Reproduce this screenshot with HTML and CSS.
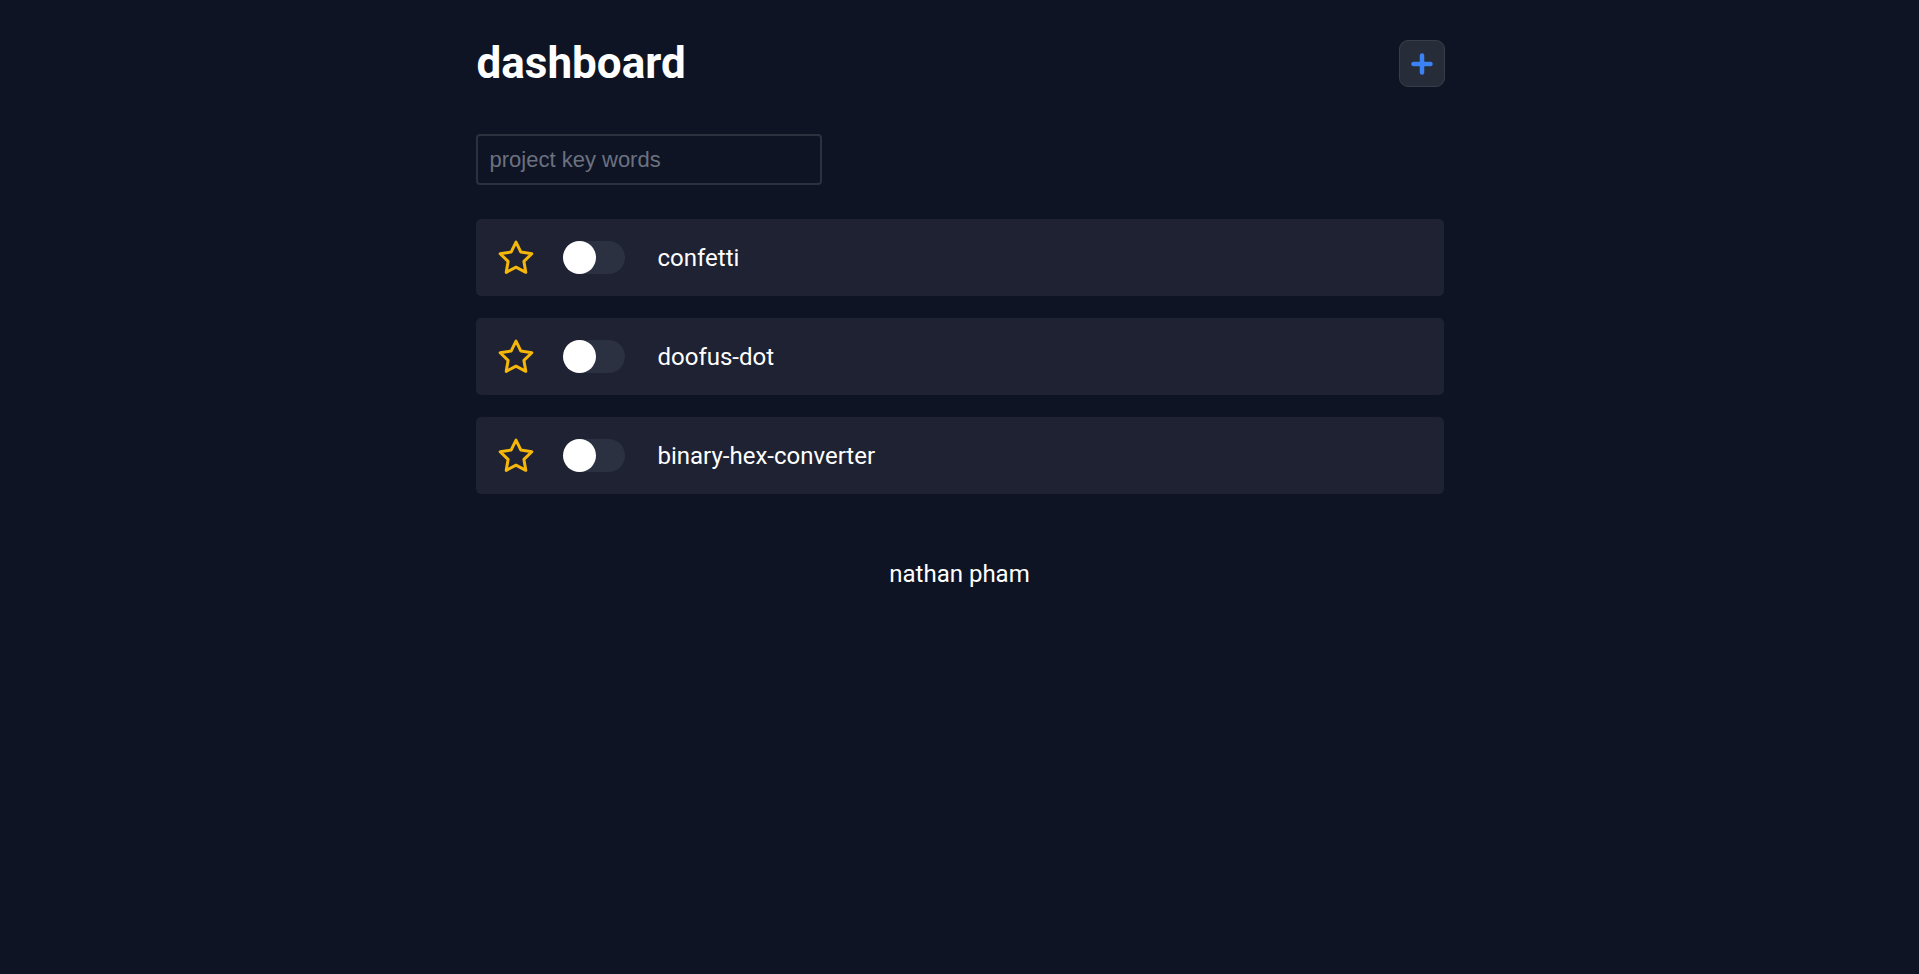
FILE: index.html
```html
<!DOCTYPE html>
<html lang="en">
<head>
<meta charset="utf-8">
<title>dashboard</title>
<link rel="stylesheet" href="styles.css">
</head>
<body>
<main class="page">
  <header class="header">
    <h1 class="title">dashboard</h1>
    <button class="add-btn" aria-label="add project">
      <svg width="22" height="22" viewBox="0 0 22 22"><line x1="11" y1="2.5" x2="11" y2="19.5" stroke="#3b82f6" stroke-width="4.5" stroke-linecap="round"/><line x1="2.5" y1="11" x2="19.5" y2="11" stroke="#3b82f6" stroke-width="4.5" stroke-linecap="round"/></svg>
    </button>
  </header>
  <input class="search" type="text" placeholder="project key words">
  <ul class="list">
    <li class="row">
      <svg class="star" width="40" height="40" viewBox="0 0 24 24"><path d="M12 2.5l2.94 5.96 6.56.96-4.75 4.63 1.12 6.54L12 17.5l-5.87 3.09 1.12-6.54L2.5 9.42l6.56-.96z" fill="none" stroke="#f5b70a" stroke-width="1.8" stroke-linejoin="round"/></svg>
      <span class="toggle"><span class="knob"></span></span>
      <span class="name">confetti</span>
    </li>
    <li class="row">
      <svg class="star" width="40" height="40" viewBox="0 0 24 24"><path d="M12 2.5l2.94 5.96 6.56.96-4.75 4.63 1.12 6.54L12 17.5l-5.87 3.09 1.12-6.54L2.5 9.42l6.56-.96z" fill="none" stroke="#f5b70a" stroke-width="1.8" stroke-linejoin="round"/></svg>
      <span class="toggle"><span class="knob"></span></span>
      <span class="name">doofus-dot</span>
    </li>
    <li class="row">
      <svg class="star" width="40" height="40" viewBox="0 0 24 24"><path d="M12 2.5l2.94 5.96 6.56.96-4.75 4.63 1.12 6.54L12 17.5l-5.87 3.09 1.12-6.54L2.5 9.42l6.56-.96z" fill="none" stroke="#f5b70a" stroke-width="1.8" stroke-linejoin="round"/></svg>
      <span class="toggle"><span class="knob"></span></span>
      <span class="name">binary-hex-converter</span>
    </li>
  </ul>
  <footer class="footer">nathan pham</footer>
</main>
</body>
</html>
```
FILE: styles.css
```css
html, body {
  margin: 0;
  padding: 0;
  background: #0e1424;
  color: #ffffff;
  font-family: Roboto, "Noto Sans", sans-serif;
  min-height: 100%;
}

.page {
  width: 968px;
  margin: 0 auto;
  padding-top: 40px;
}

.header {
  display: flex;
  justify-content: space-between;
  align-items: center;
  height: 47px;
}

.title {
  margin: 0;
  font-size: 44px;
  font-weight: 700;
  line-height: 47px;
  padding-left: 1px;
}

.add-btn {
  width: 46px;
  height: 47px;
  margin-right: -1px;
  border-radius: 9px;
  background: #272c39;
  border: 1px solid #383d4a;
  display: flex;
  align-items: center;
  justify-content: center;
  padding: 0;
  cursor: pointer;
}

.search {
  display: block;
  margin-top: 47px;
  width: 346px;
  height: 51px;
  box-sizing: border-box;
  background: #0e1424;
  border: 2px solid #2c313d;
  border-radius: 4px;
  padding: 0 12px;
  color: #d0d4dc;
  font-family: "Liberation Sans", Arial, sans-serif;
  font-size: 22px;
  outline: none;
}

.search::placeholder {
  color: #6b7180;
}

.list {
  list-style: none;
  margin: 34px 0 0;
  padding: 0;
  display: flex;
  flex-direction: column;
  gap: 22px;
}

.row {
  height: 77px;
  background: #1e2232;
  border-radius: 5px;
  display: flex;
  align-items: center;
  padding-left: 20px;
}

.star {
  display: block;
  flex: none;
}

.toggle {
  margin-left: 27px;
  width: 62px;
  height: 33px;
  border-radius: 17px;
  background: #2c3142;
  position: relative;
  flex: none;
}

.knob {
  position: absolute;
  left: 0;
  top: 0;
  width: 33px;
  height: 33px;
  border-radius: 50%;
  background: #ffffff;
}

.name {
  margin-left: 33px;
  font-size: 24px;
  color: #ffffff;
}

.footer {
  margin-top: 66px;
  text-align: center;
  font-size: 24px;
  line-height: 28px;
}
```
